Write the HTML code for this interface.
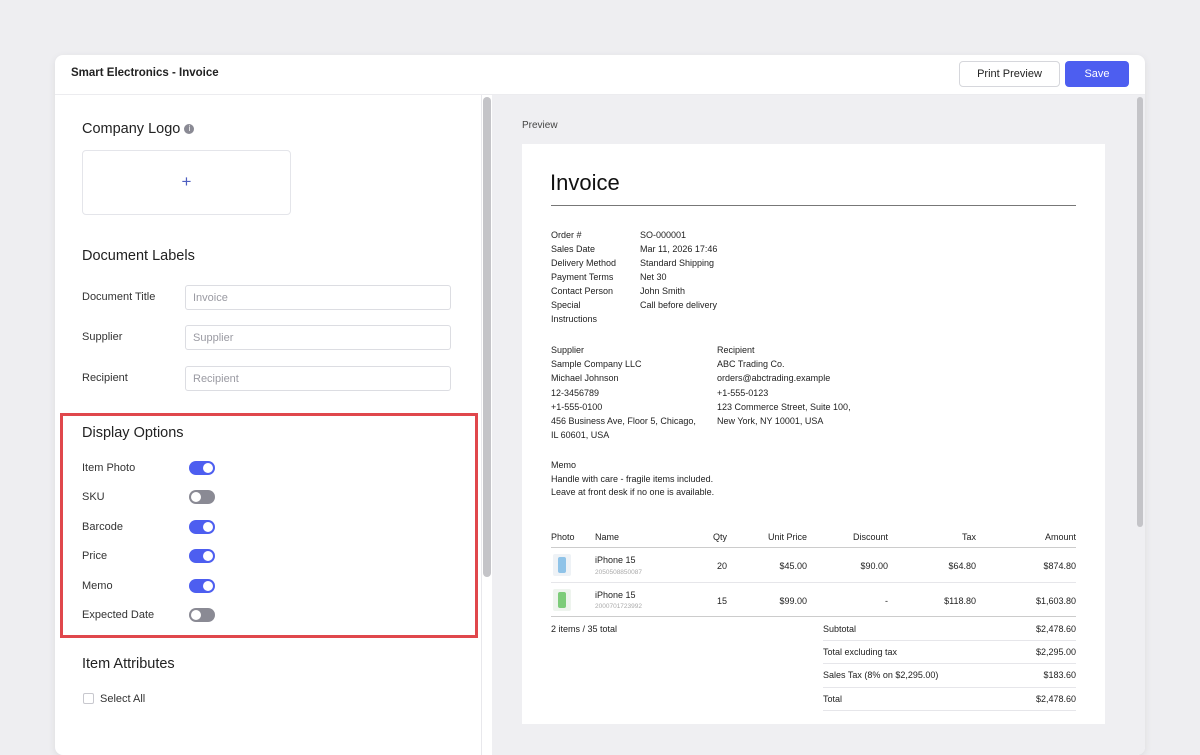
<!DOCTYPE html>
<html><head><meta charset="utf-8"><style>
*{box-sizing:border-box;margin:0;padding:0}
body{width:1200px;height:716px;overflow:hidden;background:#eeeef1;font-family:"Liberation Sans",sans-serif;color:#222;position:relative}
.a{position:absolute;white-space:nowrap}
.win{position:absolute;left:55px;top:55px;width:1090px;height:700px;background:#fff;border-radius:8px;box-shadow:0 2px 8px rgba(0,0,0,.08);overflow:hidden}
.inp{position:absolute;left:185px;width:266px;height:25px;border:1px solid #dcdde2;border-radius:3px;font-size:11px;color:#9a9aa2;padding:6px 7px}
.lbl{position:absolute;left:82px;font-size:11px;color:#333}
.h{position:absolute;left:82px;font-size:14.5px;color:#222}
.tg{position:absolute;left:189px;width:26px;height:14px;border-radius:7px;background:#4d5ef0}
.tg::after{content:"";position:absolute;top:2px;left:14px;width:10px;height:10px;border-radius:50%;background:#fff}
.tg.off{background:#8a8a94}
.tg.off::after{left:2px}
.d{position:absolute;font-size:9px;color:#222;white-space:nowrap}
.b{font-weight:normal;color:#111}
.r{text-align:right}
.ln{position:absolute;height:1px;background:#e6e6ea}
</style></head><body>
<div class="win">
  <div class="a" style="left:16px;top:12px;font-size:11.5px;font-weight:bold;color:#222">Smart Electronics - Invoice</div>
  <div class="a" style="left:904px;top:6px;width:101px;height:26px;border:1px solid #d6d7dc;border-radius:4px;font-size:11px;text-align:center;line-height:24px;color:#222">Print Preview</div>
  <div class="a" style="left:1010px;top:6px;width:64px;height:26px;background:#4d5ef0;border-radius:4px;font-size:11px;text-align:center;line-height:26px;color:#fff">Save</div>
  <div class="a" style="left:0;top:39px;width:1090px;height:1px;background:#ececef"></div>
  <div class="a" style="left:426px;top:40px;width:1px;height:680px;background:#e8e8ec"></div>
  <div class="a" style="left:428px;top:42px;width:8px;height:480px;background:#c4c4c8;border-radius:4px"></div>
  <div class="a" style="left:437px;top:40px;width:653px;height:680px;background:#efeff2"></div>
  <div class="a" style="left:1082px;top:42px;width:6px;height:430px;background:#c4c4c8;border-radius:3px"></div>
</div>
<!-- left panel -->
<div class="h" style="top:121px">Company Logo <span style="display:inline-block;width:10px;height:10px;border-radius:50%;background:#8a8a94;color:#fff;font-size:8px;text-align:center;line-height:10px;vertical-align:2px">i</span></div>
<div class="a" style="left:82px;top:150px;width:209px;height:65px;border:1px solid #e4e5ea;border-radius:4px;text-align:center;line-height:62px;font-size:17px;color:#4d5ec0">+</div>
<div class="h" style="top:248px">Document Labels</div>
<div class="lbl" style="top:291px">Document Title</div><div class="inp" style="top:285px">Invoice</div>
<div class="lbl" style="top:331px">Supplier</div><div class="inp" style="top:325px">Supplier</div>
<div class="lbl" style="top:372px">Recipient</div><div class="inp" style="top:366px">Recipient</div>
<div class="a" style="left:60px;top:413px;width:418px;height:225px;border:3px solid #e0474c"></div>
<div class="h" style="top:425px">Display Options</div>
<div class="lbl" style="top:462px">Item Photo</div><div class="tg" style="top:461px"></div>
<div class="lbl" style="top:491px">SKU</div><div class="tg off" style="top:490px"></div>
<div class="lbl" style="top:521px">Barcode</div><div class="tg" style="top:520px"></div>
<div class="lbl" style="top:550px">Price</div><div class="tg" style="top:549px"></div>
<div class="lbl" style="top:580px">Memo</div><div class="tg" style="top:579px"></div>
<div class="lbl" style="top:609px">Expected Date</div><div class="tg off" style="top:608px"></div>
<div class="h" style="top:656px">Item Attributes</div>
<div class="a" style="left:83px;top:693px;width:11px;height:11px;border:1px solid #c8c8ce;border-radius:2px"></div>
<div class="lbl" style="left:100px;top:693px">Select All</div>
<!-- preview -->
<div class="a" style="left:522px;top:120px;font-size:10px;color:#444">Preview</div>
<div class="a" style="left:522px;top:144px;width:583px;height:580px;background:#fff"></div>
<div class="a" style="left:550px;top:170px;font-size:22px;color:#111">Invoice</div>
<div class="a" style="left:551px;top:205px;width:525px;height:1px;background:#777"></div>
<div class="d" style="left:551px;top:228px;line-height:14px">Order #<br>Sales Date<br>Delivery Method<br>Payment Terms<br>Contact Person<br>Special<br>Instructions</div>
<div class="d" style="left:640px;top:228px;line-height:14px">SO-000001<br>Mar 11, 2026 17:46<br>Standard Shipping<br>Net 30<br>John Smith<br>Call before delivery</div>
<div class="d" style="left:551px;top:343px;line-height:14.2px">Supplier<br>Sample Company LLC<br>Michael Johnson<br>12-3456789<br>+1-555-0100<br>456 Business Ave, Floor 5, Chicago,<br>IL 60601, USA</div>
<div class="d" style="left:717px;top:343px;line-height:14.2px">Recipient<br>ABC Trading Co.<br>orders@abctrading.example<br>+1-555-0123<br>123 Commerce Street, Suite 100,<br>New York, NY 10001, USA</div>
<div class="d" style="left:551px;top:459px;line-height:13.5px">Memo<br>Handle with care - fragile items included.<br>Leave at front desk if no one is available.</div>
<div class="d" style="left:551px;top:532px">Photo</div><div class="d" style="left:595px;top:532px">Name</div>
<div class="d r" style="left:667px;width:60px;top:532px">Qty</div>
<div class="d r" style="left:737px;width:70px;top:532px">Unit Price</div>
<div class="d r" style="left:818px;width:70px;top:532px">Discount</div>
<div class="d r" style="left:906px;width:70px;top:532px">Tax</div>
<div class="d r" style="left:996px;width:80px;top:532px">Amount</div>
<div class="ln" style="left:551px;top:547px;width:525px;background:#ccc"></div>
<div class="a" style="left:553px;top:554px;width:18px;height:22px;background:#eef2f6;border-radius:2px"><div style="margin:3px 5px;width:8px;height:16px;background:#8fc3e8;border-radius:2px"></div></div>
<div class="d" style="left:595px;top:555px">iPhone 15</div><div class="d" style="left:595px;top:569px;font-size:6.5px;color:#aaa">2050508850087</div>
<div class="d r" style="left:667px;width:60px;top:561px">20</div><div class="d r" style="left:737px;width:70px;top:561px">$45.00</div><div class="d r" style="left:818px;width:70px;top:561px">$90.00</div><div class="d r" style="left:906px;width:70px;top:561px">$64.80</div><div class="d r" style="left:996px;width:80px;top:561px">$874.80</div>
<div class="ln" style="left:551px;top:582px;width:525px"></div>
<div class="a" style="left:553px;top:589px;width:18px;height:22px;background:#eef4ee;border-radius:2px"><div style="margin:3px 5px;width:8px;height:16px;background:#7dcc7a;border-radius:2px"></div></div>
<div class="d" style="left:595px;top:590px">iPhone 15</div><div class="d" style="left:595px;top:603px;font-size:6.5px;color:#aaa">2000701723992</div>
<div class="d r" style="left:667px;width:60px;top:596px">15</div><div class="d r" style="left:737px;width:70px;top:596px">$99.00</div><div class="d r" style="left:818px;width:70px;top:596px">-</div><div class="d r" style="left:906px;width:70px;top:596px">$118.80</div><div class="d r" style="left:996px;width:80px;top:596px">$1,603.80</div>
<div class="ln" style="left:551px;top:616px;width:525px;background:#ccc"></div>
<div class="d" style="left:551px;top:624px">2 items / 35 total</div>
<div class="d" style="left:823px;top:624px">Subtotal</div><div class="d r" style="left:996px;width:80px;top:624px">$2,478.60</div>
<div class="ln" style="left:823px;top:640px;width:253px"></div>
<div class="d" style="left:823px;top:647px">Total excluding tax</div><div class="d r" style="left:996px;width:80px;top:647px">$2,295.00</div>
<div class="ln" style="left:823px;top:663px;width:253px"></div>
<div class="d" style="left:823px;top:670px">Sales Tax (8% on $2,295.00)</div><div class="d r" style="left:996px;width:80px;top:670px">$183.60</div>
<div class="ln" style="left:823px;top:687px;width:253px"></div>
<div class="d" style="left:823px;top:694px">Total</div><div class="d r" style="left:996px;width:80px;top:694px">$2,478.60</div>
<div class="ln" style="left:823px;top:710px;width:253px"></div>
</body></html>
